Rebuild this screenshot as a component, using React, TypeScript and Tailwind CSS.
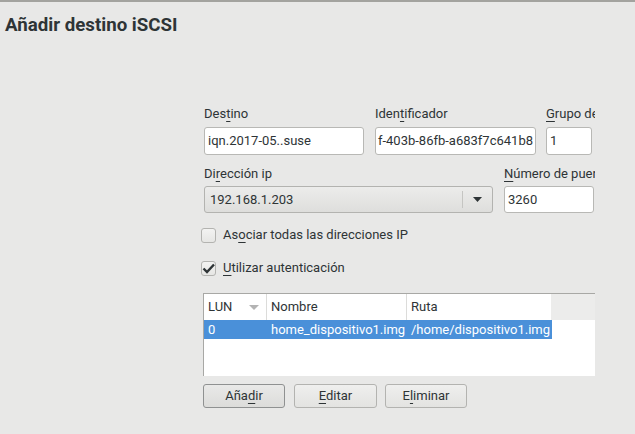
import React from 'react';

const Mn = ({ children }: { children: React.ReactNode }) => (
  <span className="underline decoration-1 underline-offset-[3px]">{children}</span>
);

const Field = ({ value, scrolled }: { value: string; scrolled?: boolean }) => (
  <div className="h-full w-full overflow-hidden rounded-[3px] border border-[#b8b8b5] bg-white">
    <div
      className={
        scrolled
          ? 'flex h-full items-center justify-end whitespace-nowrap pr-[2px] text-[13px] text-[#2e3436]'
          : 'flex h-full items-center whitespace-nowrap pl-[3px] text-[13px] text-[#2e3436]'
      }
    >
      {value}
    </div>
  </div>
);

const Button = ({
  children,
  primary,
  className = '',
}: {
  children: React.ReactNode;
  primary?: boolean;
  className?: string;
}) => (
  <button
    className={
      (primary
        ? 'border-[#8f9191] from-[#e9e9e8] to-[#dcdcda] '
        : 'border-[#b3b3b0] from-[#efefee] to-[#e3e3e1] ') +
      'h-[24px] shrink-0 rounded-[3px] border bg-gradient-to-b text-[13px] text-[#2e3436] ' +
      className
    }
  >
    {children}
  </button>
);

const Check = ({ checked, children }: { checked?: boolean; children: React.ReactNode }) => (
  <div className="flex h-[18px] items-center">
    <div className="flex h-[15px] w-[15px] items-center justify-center rounded-[3px] border border-[#b3b3b0] bg-gradient-to-b from-[#f3f3f2] to-[#e6e6e4]">
      {checked && (
        <svg width="13" height="11" viewBox="0 0 13 11">
          <path d="M1.5 5.5 L5 9 L12 1.5" fill="none" stroke="#2e3436" strokeWidth="2.4" />
        </svg>
      )}
    </div>
    <span className="ml-[7px] text-[13px] text-[#2e3436]">{children}</span>
  </div>
);

export default function App() {
  return (
    <div className="h-[434px] w-[635px] overflow-hidden border-t-2 border-[#a3a39f] bg-[#e8e8e7] font-['Roboto',sans-serif] text-[#2e3436]">
      <h1 className="pl-[5px] pt-[11px] text-[18.7px] font-bold leading-[24px] text-[#2e3436]">
        Añadir destino iSCSI
      </h1>

      <div className="ml-[201px] mt-[68px] w-[394px] overflow-hidden">
        {/* row 1 */}
        <div className="flex pl-[3px]">
          <div className="w-[160px] shrink-0">
            <div className="h-[18px] text-[13px] leading-[18px]">
              Des<Mn>t</Mn>ino
            </div>
            <div className="mt-[4px] h-[28px]">
              <Field value="iqn.2017-05..suse" />
            </div>
          </div>
          <div className="ml-[11px] w-[161px] shrink-0">
            <div className="h-[18px] text-[13px] leading-[18px]">
              Iden<Mn>t</Mn>ificador
            </div>
            <div className="mt-[4px] h-[28px]">
              <Field value="f-403b-86fb-a683f7c641b8" scrolled />
            </div>
          </div>
          <div className="ml-[10px] w-[46px] shrink-0">
            <div className="h-[18px] whitespace-nowrap text-[13px] leading-[18px]">
              <Mn>G</Mn>rupo de
            </div>
            <div className="mt-[4px] h-[28px]">
              <Field value="1" />
            </div>
          </div>
        </div>

        {/* row 2 */}
        <div className="mt-[10px] flex pl-[3px]">
          <div className="w-[289px] shrink-0">
            <div className="h-[18px] text-[13px] leading-[18px]">
              Di<Mn>r</Mn>ección ip
            </div>
            <div className="mt-[3px] flex h-[27px] items-center rounded-[3px] border border-[#b3b3b0] bg-gradient-to-b from-[#ececeb] to-[#dededc]">
              <span className="flex-1 pl-[5px] text-[13px]">192.168.1.203</span>
              <div className="h-[17px] w-px bg-[#c5c5c2]" />
              <svg className="mx-[10px]" width="9" height="5" viewBox="0 0 9 5">
                <path d="M0 0 H9 L4.5 5 Z" fill="#2e3436" />
              </svg>
            </div>
          </div>
          <div className="ml-[11px] w-[90px] shrink-0">
            <div className="h-[18px] whitespace-nowrap text-[13px] leading-[18px]">
              <Mn>N</Mn>úmero de puer
            </div>
            <div className="mt-[3px] h-[27px]">
              <Field value="3260" />
            </div>
          </div>
        </div>

        {/* checks */}
        <div className="mt-[13px]">
          <Check>
            As<Mn>o</Mn>ciar todas las direcciones IP
          </Check>
        </div>
        <div className="mt-[15px]">
          <Check checked>
            <Mn>U</Mn>tilizar autenticación
          </Check>
        </div>

        {/* table */}
        <div className="ml-[2px] mt-[16px] h-[83px] border-l border-t border-[#a8a8a5] bg-white text-[13px]">
          <div className="flex h-[26px]">
            <div className="flex w-[63px] items-center justify-between border-r border-[#dcdcda] pl-[4px] pr-[7px]">
              <span>LUN</span>
              <svg width="10" height="5" viewBox="0 0 10 5">
                <path d="M0 0 H10 L5 5 Z" fill="#b3b3b3" />
              </svg>
            </div>
            <div className="flex w-[140px] items-center border-r border-[#dcdcda] pl-[4px]">Nombre</div>
            <div className="flex w-[144px] items-center pl-[4px]">Ruta</div>
            <div className="flex-1 bg-[#ececeb]" />
          </div>
          <div className="flex h-[19px] w-[348px] items-center bg-[#4a90d9] text-white">
            <span className="w-[63px] pl-[4px]">0</span>
            <span className="w-[140px] pl-[4px]">home_dispositivo1.img</span>
            <span className="pl-[4px]">/home/dispositivo1.img</span>
          </div>
        </div>

        {/* buttons */}
        <div className="ml-[2px] mt-[8px] flex">
          <Button primary className="w-[82px]">
            Aña<Mn>d</Mn>ir
          </Button>
          <Button className="ml-[9px] w-[83px]">
            <Mn>E</Mn>ditar
          </Button>
          <Button className="ml-[8px] w-[82px]">
            E<Mn>l</Mn>iminar
          </Button>
        </div>
      </div>
    </div>
  );
}
